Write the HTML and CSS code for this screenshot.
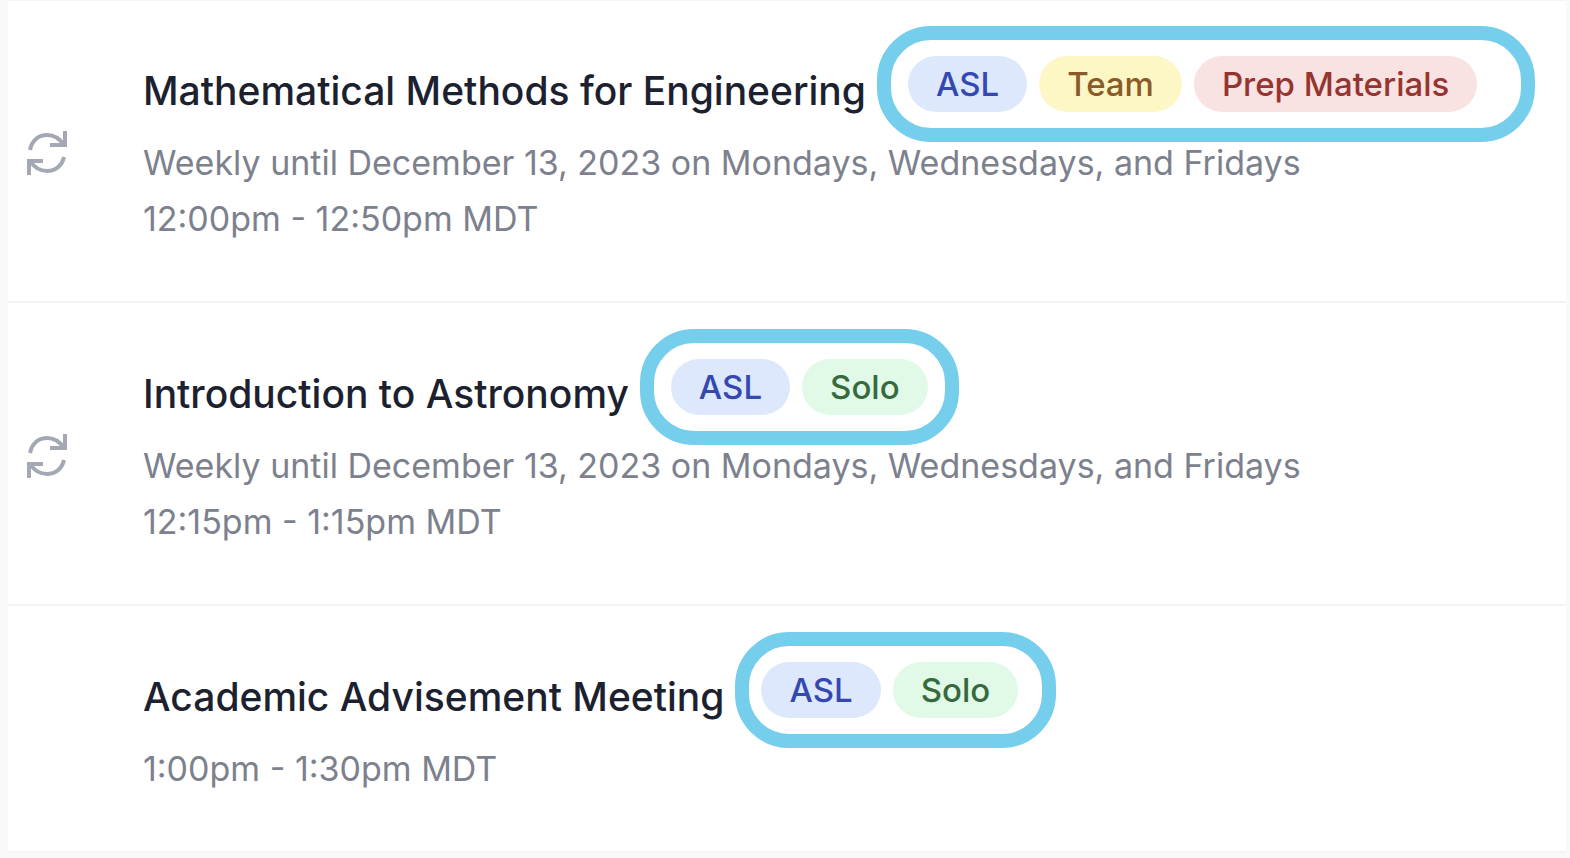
FILE: index.html
```html
<!DOCTYPE html>
<html lang="en">
	<head>
		<meta charset="UTF-8">
		<title>Requests</title>
		<link rel="stylesheet" href="styles.css">
	</head>
	<body>
		<ul class="list">
			<li class="item">
				<div class="repeat">
					<svg viewBox="0 0 40 46" aria-hidden="true">
						<path d="M3 20C5 10 12 5 20 5c7 0 13 4 17 10M38 1v14H23M37 27c-2 9-9 14-17 14-7 0-13-4-17-10M2 45V31h14"/>
					</svg>
				</div>
				<div class="info">
					<div class="heading">
						<h2>Mathematical Methods for Engineering</h2>
						<div class="tags wide">
							<span class="tag blue">ASL</span>
							<span class="tag yellow">Team</span>
							<span class="tag red">Prep Materials</span>
						</div>
					</div>
					<p>Weekly until December 13, 2023 on Mondays, Wednesdays, and Fridays</p>
					<p>12:00pm - 12:50pm MDT</p>
				</div>
			</li>
			<li class="item">
				<div class="repeat">
					<svg viewBox="0 0 40 46" aria-hidden="true">
						<path d="M3 20C5 10 12 5 20 5c7 0 13 4 17 10M38 1v14H23M37 27c-2 9-9 14-17 14-7 0-13-4-17-10M2 45V31h14"/>
					</svg>
				</div>
				<div class="info">
					<div class="heading">
						<h2>Introduction to Astronomy</h2>
						<div class="tags">
							<span class="tag blue">ASL</span>
							<span class="tag green">Solo</span>
						</div>
					</div>
					<p>Weekly until December 13, 2023 on Mondays, Wednesdays, and Fridays</p>
					<p>12:15pm - 1:15pm MDT</p>
				</div>
			</li>
			<li class="item">
				<div class="repeat"></div>
				<div class="info">
					<div class="heading">
						<h2>Academic Advisement Meeting</h2>
						<div class="tags once">
							<span class="tag blue">ASL</span>
							<span class="tag green">Solo</span>
						</div>
					</div>
					<p>1:00pm - 1:30pm MDT</p>
				</div>
			</li>
		</ul>
	</body>
</html>
```

FILE: styles.css
```css
*{
	margin: 0;
	padding: 0;
	box-sizing: border-box;
}
body{
	background: #f9f9f9;
	font-family: Inter, "Liberation Sans", sans-serif;
}
.list{
	list-style: none;
	margin: 0 4px 0 8px;
	border-top: 1px solid #f3f4f6;
	border-bottom: 2px solid #f3f4f6;
	background: white;
}
.item{
	display: flex;
	align-items: center;
	padding: 25px 32px 54px 19px;
}
.item + .item{
	padding-top: 26px;
	border-top: 2px solid #f3f4f6;
}
.repeat{
	flex: none;
	width: 116px;
	padding-top: 32px;
}
.repeat svg{
	display: block;
	width: 40px;
	height: 46px;
	fill: none;
	stroke: #a3a8b4;
	stroke-width: 4;
}
.heading{
	display: flex;
	align-items: center;
	gap: 11px;
	margin-bottom: -7px;
	white-space: nowrap;
}
h2{
	padding-top: 12px;
	font-size: 39px;
	font-weight: 500;
	color: #1c2130;
}
p{
	font-size: 34px;
	line-height: 56px;
	color: #7c818d;
	white-space: nowrap;
}
/*标签外框*/
.tags{
	display: flex;
	gap: 12px;
	padding: 16px 17px;
	border: 14px solid #75ceec;
	border-radius: 54px;
}
.tags.wide{
	padding-right: 44px;
}
.tags.once{
	padding-left: 12px;
	padding-right: 24px;
}
.tag{
	padding: 0 28px;
	border-radius: 28px;
	font-size: 33px;
	font-weight: 500;
	line-height: 56px;
}
.blue{
	background: #dde8fc;
	color: #3448b0;
}
.yellow{
	background: #fdf7c6;
	color: #8a5a28;
}
.red{
	background: #f8e2e2;
	color: #963430;
}
.green{
	background: #e0fae7;
	color: #37693f;
}
```
